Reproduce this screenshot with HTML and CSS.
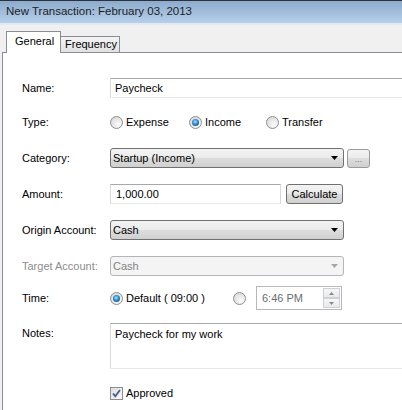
FILE: index.html
```html
<!DOCTYPE html>
<html>
<head>
<meta charset="utf-8">
<link rel="stylesheet" href="styles.css">
</head>
<body>
<div class="window">
  <div class="titlebar">New Transaction: February 03, 2013</div>
  <div class="tabstrip">
    <div class="tab tab-active">General</div>
    <div class="tab tab-inactive">Frequency</div>
  </div>
  <div class="panel">
    <div class="row">
      <span class="lbl">Name:</span>
      <div class="textbox tb-wide">Paycheck</div>
    </div>
    <div class="row row-type">
      <span class="lbl">Type:</span>
      <div class="opt opt-expense"><span class="radio"></span><span class="opt-text">Expense</span></div>
      <div class="opt opt-income"><span class="radio radio-on"></span><span class="opt-text">Income</span></div>
      <div class="opt"><span class="radio"></span><span class="opt-text">Transfer</span></div>
    </div>
    <div class="row">
      <span class="lbl">Category:</span>
      <div class="combo"><span>Startup (Income)</span>
        <svg class="arrow" width="7" height="4" viewBox="0 0 7 4"><path d="M0 0H7L3.5 4Z" fill="#000"/></svg>
      </div>
      <div class="btn btn-dots">...</div>
    </div>
    <div class="row">
      <span class="lbl">Amount:</span>
      <div class="textbox tb-amount">1,000.00</div>
      <div class="btn btn-calc">Calculate</div>
    </div>
    <div class="row">
      <span class="lbl">Origin Account:</span>
      <div class="combo"><span>Cash</span>
        <svg class="arrow" width="7" height="4" viewBox="0 0 7 4"><path d="M0 0H7L3.5 4Z" fill="#000"/></svg>
      </div>
    </div>
    <div class="row">
      <span class="lbl lbl-disabled">Target Account:</span>
      <div class="combo combo-disabled"><span>Cash</span>
        <svg class="arrow" width="7" height="4" viewBox="0 0 7 4"><path d="M0 0H7L3.5 4Z" fill="#a7a7a7"/></svg>
      </div>
    </div>
    <div class="row row-time">
      <span class="lbl">Time:</span>
      <div class="opt opt-default"><span class="radio radio-on"></span><span class="opt-text">Default ( 09:00 )</span></div>
      <span class="radio"></span>
      <div class="timebox">
        <span class="time-text">6:46 PM</span>
        <div class="spin">
          <div class="spin-btn"><svg width="5" height="3" viewBox="0 0 5 3"><path d="M0 3H5L2.5 0Z" fill="#8a8a8a"/></svg></div>
          <div class="spin-btn"><svg width="5" height="3" viewBox="0 0 5 3"><path d="M0 0H5L2.5 3Z" fill="#8a8a8a"/></svg></div>
        </div>
      </div>
    </div>
    <div class="row row-notes">
      <span class="lbl lbl-notes">Notes:</span>
      <div class="textarea">Paycheck for my work</div>
    </div>
    <div class="row row-approved">
      <span class="check"><svg width="11" height="11" viewBox="0 0 11 11"><path d="M2 5.5L4.3 8.2L9 2" fill="none" stroke="#4a5d92" stroke-width="1.8"/></svg></span>
      <span class="opt-text">Approved</span>
    </div>
  </div>
</div>
</body>
</html>
```
FILE: styles.css
```css
* { box-sizing: border-box; }
html, body { margin: 0; padding: 0; }
body {
  font-family: "Liberation Sans", Arial, sans-serif;
  font-size: 11px;
  color: #000;
  background: #f0f0f0;
}
.window {
  width: 402px;
  height: 410px;
  overflow: hidden;
  background: #f0f0f0;
  display: flex;
  flex-direction: column;
}
.titlebar {
  height: 23px;
  flex: none;
  border-top: 1px solid #2e3236;
  background: linear-gradient(#8cabcd, #b7d0ea);
  padding-left: 6px;
  font-size: 11.5px;
  line-height: 21px;
  color: #1e1e1e;
}
.tabstrip {
  height: 29px;
  flex: none;
  border-top: 2px solid #e2e9f2;
  display: flex;
  align-items: flex-end;
  padding-left: 6px;
}
.tab {
  border: 1px solid #898c95;
  border-bottom: none;
  line-height: 14px;
}
.tab-active {
  height: 22px;
  width: 55px;
  background: #fff;
  margin-bottom: -1px;
  position: relative;
  z-index: 1;
  padding: 2px 0 0 8px;
}
.tab-inactive {
  height: 16px;
  width: 60px;
  margin-left: -1px;
  background: linear-gradient(#f4f4f4, #e1e1e1);
  padding: 0 0 0 4px;
}
.panel {
  flex: 1;
  margin-left: 2px;
  border-top: 1px solid #898c95;
  border-left: 1px solid #898c95;
  background: #fff;
  padding: 25px 0 0 19px;
  display: flex;
  flex-direction: column;
}
.row {
  display: flex;
  align-items: center;
  height: 20px;
  flex: none;
  margin-top: 16px;
}
.row:first-child { margin-top: 0; }
.row-type { margin-top: 14px; }
.row-time { margin-top: 10px; height: 24px; }
.row-notes { margin-top: 13px; height: 46px; align-items: flex-start; }
.row-approved { margin-top: 15px; height: 18px; padding-left: 88px; }
.lbl { width: 88px; flex: none; }
.lbl-disabled { color: #8d8d8d; }
.lbl-notes { padding-top: 4px; }

.textbox {
  height: 20px;
  flex: none;
  border: 1px solid #d7d9de;
  border-top-color: #a5a8ad;
  border-bottom-color: #e3e9ef;
  background: #fff;
  padding: 0 4px;
  line-height: 18px;
}
.tb-wide { width: 310px; }
.tb-amount { width: 171px; padding-left: 5px; }

.opt { display: flex; align-items: center; flex: none; }
.opt-expense { width: 79px; }
.opt-income { width: 77px; }
.opt-default { width: 123px; }
.opt-text { margin-left: 3px; }

.radio {
  width: 13px;
  height: 13px;
  flex: none;
  border-radius: 50%;
  border: 1px solid #8e8f8f;
  background: radial-gradient(circle at 65% 70%, #fcfcfc 0, #e9e9e9 45%, #cfcfcf 100%);
  display: flex;
  align-items: center;
  justify-content: center;
}
.radio-on::after {
  content: "";
  width: 7px;
  height: 7px;
  border-radius: 50%;
  background: radial-gradient(circle at 45% 40%, #b4e4fb 0, #3f9ee0 35%, #155a94 75%, #0c3e6b 100%);
}

.combo {
  width: 234px;
  height: 20px;
  flex: none;
  border: 1px solid #707070;
  border-radius: 3px;
  background: linear-gradient(#f3f3f3 0, #ebebeb 50%, #dddddd 50%, #d0d0d0 100%);
  display: flex;
  align-items: center;
  justify-content: space-between;
  padding: 0 5px 0 2px;
}
.combo-disabled {
  border-color: #b2b6b9;
  background: #f4f4f4;
  color: #838383;
}
.arrow { flex: none; }

.btn {
  height: 20px;
  flex: none;
  border: 1px solid #707070;
  border-radius: 3px;
  background: linear-gradient(#f3f3f3 0, #ebebeb 50%, #dddddd 50%, #d0d0d0 100%);
  display: flex;
  align-items: center;
  justify-content: center;
}
.btn-dots {
  width: 23px;
  height: 19px;
  margin-left: 3px;
  color: #7a7a7a;
  font-size: 9px;
  align-items: flex-end;
  padding-bottom: 3px;
  border-color: #9a9a9a;
}
.btn-calc {
  width: 57px;
  margin-left: 5px;
}

.timebox {
  width: 86px;
  height: 24px;
  flex: none;
  margin-left: 10px;
  border: 1px solid #b5b9bd;
  background: #fff;
  display: flex;
  align-items: center;
  justify-content: space-between;
  padding: 1px 1px 1px 5px;
}
.time-text { color: #6d6d6d; }
.spin {
  width: 17px;
  height: 100%;
  display: flex;
  flex-direction: column;
}
.spin-btn {
  flex: 1;
  border: 1px solid #cfd2d5;
  background: linear-gradient(#f7f7f7, #e9e9e9);
  display: flex;
  align-items: center;
  justify-content: center;
}

.textarea {
  width: 310px;
  height: 46px;
  flex: none;
  border: 1px solid #d7d9de;
  border-top-color: #a5a8ad;
  border-bottom-color: #e3e9ef;
  padding: 3px 4px;
  line-height: 14px;
}

.check {
  width: 13px;
  height: 13px;
  flex: none;
  border: 1px solid #8e8f8f;
  background: linear-gradient(135deg, #dcdcdc, #fbfbfb);
  display: flex;
  align-items: center;
  justify-content: center;
}
```
